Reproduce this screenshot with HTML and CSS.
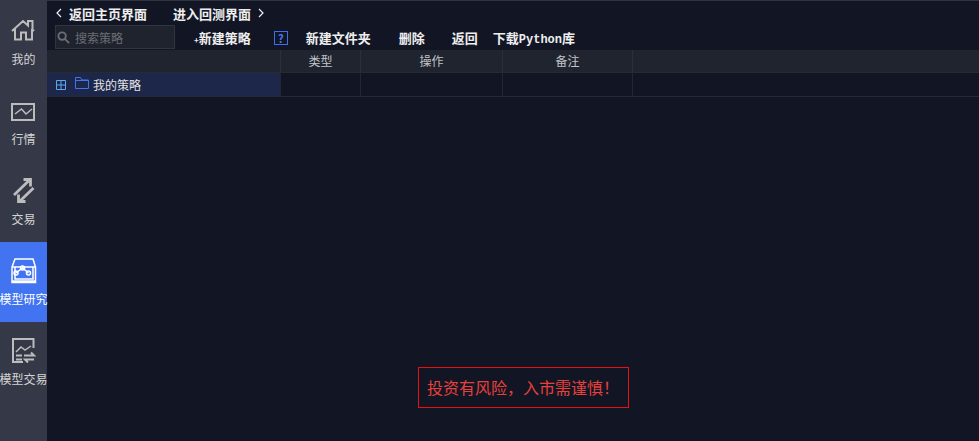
FILE: index.html
```html
<!DOCTYPE html>
<html lang="zh-CN">
<head>
    <meta charset="UTF-8">
    <title>我的策略</title>
    <link rel="stylesheet" href="styles.css">
</head>
<body>
    <!-- Left navigation -->
    <div class="side">
        <div class="nav-item">
            <svg class="nav-icon" viewBox="0 0 24 24"><path d="M0 13 11 3l5 4.500V3h4.500v8.500L22 13M3 11v10.500h6v-7h5v7h6V11" /></svg>
            <span>我的</span>
        </div>
        <div class="nav-item">
            <svg class="nav-icon" viewBox="0 0 24 24"><rect x="0" y="6" width="22" height="16" /><path class="thin" d="M3 16 9.500 11 14 16l6-5" /></svg>
            <span>行情</span>
        </div>
        <div class="nav-item">
            <svg class="nav-icon" viewBox="0 0 24 24"><path class="thick" d="M2 17 17 2.500M11.500 1.500h7v7M21.500 10 8 23M13.500 23.500h-7v-7" /></svg>
            <span>交易</span>
        </div>
        <div class="nav-item active">
            <svg class="nav-icon" viewBox="0 0 24 24"><path d="M0 9 3 1h18l2.500 8v15.500H0zM0 9h23.500M0 23h23.500" /><path d="M3 9v12h18V9" /><path d="m4 15 6.500-5 6 5" /><circle cx="4" cy="15" r="2" /><circle cx="10.500" cy="10" r="2" /><circle cx="16.500" cy="15" r="2" /></svg>
            <span>模型研究</span>
        </div>
        <div class="nav-item">
            <svg class="nav-icon" viewBox="0 0 24 24"><path d="M21.500 10V1H1v23h10" /><path class="thin" d="m4 14 5-5 4 3 6-4" /><path d="M4 17.500h6M4 21.500h6M12 17.500h10l-3-3M22 21.500H13l3 3" /></svg>
            <span>模型交易</span>
        </div>
    </div>

    <div class="main">
        <div class="top-links">
            <svg class="chevron" viewBox="0 0 6 10"><path d="M5 1 1 5l4 4" /></svg>
            <b class="link-back">返回主页界面</b>
            <b>进入回测界面</b>
            <svg class="chevron right" viewBox="0 0 6 10"><path d="m1 1 4 4-4 4" /></svg>
        </div>

        <div class="toolbar">
            <div class="search">
                <svg viewBox="0 0 14 14"><circle cx="5.500" cy="5.500" r="4" /><path d="m8.500 8.500 4.500 4.500" /></svg>
                <span>搜索策略</span>
            </div>
            <b class="new-strategy"><span class="plus-sign">+</span>新建策略</b>
            <span class="help">?</span>
            <b class="new-folder">新建文件夹</b>
            <b class="del">删除</b>
            <b class="back">返回</b>
            <b class="download">下载<i>Python</i>库</b>
        </div>

        <div class="table-head">
            <div class="col-name"></div>
            <div class="col-type">类型</div>
            <div class="col-op">操作</div>
            <div class="col-note">备注</div>
            <div class="col-rest"></div>
        </div>
        <div class="table-row">
            <div class="col-name selected">
                <svg class="plus" viewBox="0 0 10 10"><path d="M.5.500h9v9h-9zM5 .500v9M.500 5h9" /></svg>
                <svg class="folder" viewBox="0 0 14 12"><path d="M.5 11.500V.500h5l1.500 2.500h6.500v8.500zM.500 3.500h13" /></svg>
                <span>我的策略</span>
            </div>
            <div class="col-type"></div>
            <div class="col-op"></div>
            <div class="col-note"></div>
            <div class="col-rest"></div>
        </div>
    </div>

    <div class="warning">投资有风险，入市需谨慎！</div>
</body>
</html>
```
FILE: styles.css
```css
html, body {
    height: 100%;
}

body {
    display: flex;
    margin: 0;
    overflow: hidden;
    font-family: "Noto Sans CJK SC", "Liberation Sans", sans-serif;
    font-size: 12px;
    background-color: #121624;
    color: #e4e4e4;
}

/* Left navigation */
.side {
    width: 47px;
    flex-shrink: 0;
    padding-top: 2px;
    background: #353947;
}

.nav-item {
    display: flex;
    flex-direction: column;
    align-items: center;
    height: 80px;
    padding-top: 16px;
    box-sizing: border-box;
    color: #d4d4d4;
    white-space: nowrap;
}

.nav-item span {
    margin-top: 8px;
    line-height: 18px;
}

.nav-item.active {
    background: #4273f0;
    color: #fff;
}

.nav-icon {
    width: 24px;
    height: 24px;
    overflow: visible;
    fill: none;
    stroke: #bcbcbc;
    stroke-width: 2;
}

.nav-icon .thick {
    stroke-width: 2.800;
}

.nav-icon .thin {
    stroke-width: 1.500;
}

.active .nav-icon {
    stroke: #fff;
    stroke-width: 1.500;
}

/* Right part */
.main {
    flex: 1;
    min-width: 0;
    border-top: 1px solid #30343f;
}

.top-links {
    display: flex;
    align-items: center;
    height: 24px;
    padding-left: 9px;
    font-size: 13px;
    color: #eee;
}

.top-links .link-back {
    margin: 0 26px 0 7px;
}

.chevron {
    width: 6px;
    height: 10px;
    fill: none;
    stroke: #eee;
    stroke-width: 1.200;
}

.chevron.right {
    margin-left: 7px;
}

.toolbar {
    display: flex;
    align-items: center;
    height: 25px;
    padding-left: 8px;
    font-size: 13px;
    color: #eee;
}

.search {
    display: flex;
    align-items: center;
    width: 120px;
    height: 24px;
    margin-bottom: 1px;
    padding-left: 1px;
    box-sizing: border-box;
    border: 1px solid #30343f;
    background: #1f232e;
    font-size: 12px;
    color: #6c6e75;
}

.search svg {
    width: 13px;
    height: 13px;
    margin-right: 5px;
    fill: none;
    stroke: #6c6e75;
    stroke-width: 2;
}

.new-strategy {
    margin-left: 19px;
}

.plus-sign {
    font-size: 8px;
}

.help {
    width: 12px;
    height: 12px;
    margin-left: 23px;
    border: 1px solid #3f6fe8;
    color: #4a7bf5;
    font-size: 11px;
    font-weight: bold;
    line-height: 12px;
    text-align: center;
}

.new-folder {
    margin-left: 18px;
}

.del {
    margin-left: 28px;
}

.back {
    margin-left: 27px;
}

.download {
    margin-left: 15px;
}

.download i {
    font-family: "Liberation Mono", monospace;
    font-size: 12px;
    font-style: normal;
}

/* Strategy table */
.table-head,
.table-row {
    display: flex;
    height: 24px;
    box-sizing: border-box;
    border-bottom: 1px solid #262a35;
}

.table-head {
    height: 23px;
    background: #20242f;
    color: #c0c4cc;
    line-height: 22px;
    text-align: center;
}

.col-name {
    width: 233px;
    flex-shrink: 0;
    box-sizing: border-box;
}

.col-type,
.col-op,
.col-note {
    flex-shrink: 0;
    box-sizing: border-box;
    border-left: 1px solid #2b2f3a;
}

.col-type {
    width: 80px;
}

.col-op {
    width: 142px;
}

.col-note {
    width: 130px;
}

.col-rest {
    flex: 1;
    border-left: 1px solid #2b2f3a;
}

.table-row .col-type,
.table-row .col-op,
.table-row .col-note,
.table-row .col-rest {
    border-color: #232732;
}

.selected {
    display: flex;
    align-items: center;
    padding-left: 9px;
    background: #1c274a;
}

.plus {
    width: 10px;
    height: 10px;
    margin-right: 9px;
    fill: none;
    stroke: #5da9f0;
}

.folder {
    width: 14px;
    height: 12px;
    margin: -3px 4px 0 0;
    fill: none;
    stroke: #4273f0;
}

/* Floating risk notice */
.warning {
    position: absolute;
    left: 418px;
    top: 367px;
    width: 211px;
    height: 41px;
    padding-left: 8px;
    box-sizing: border-box;
    border: 1px solid #e81010;
    color: #e8403c;
    font-size: 16px;
    line-height: 39px;
    white-space: nowrap;
}
```
